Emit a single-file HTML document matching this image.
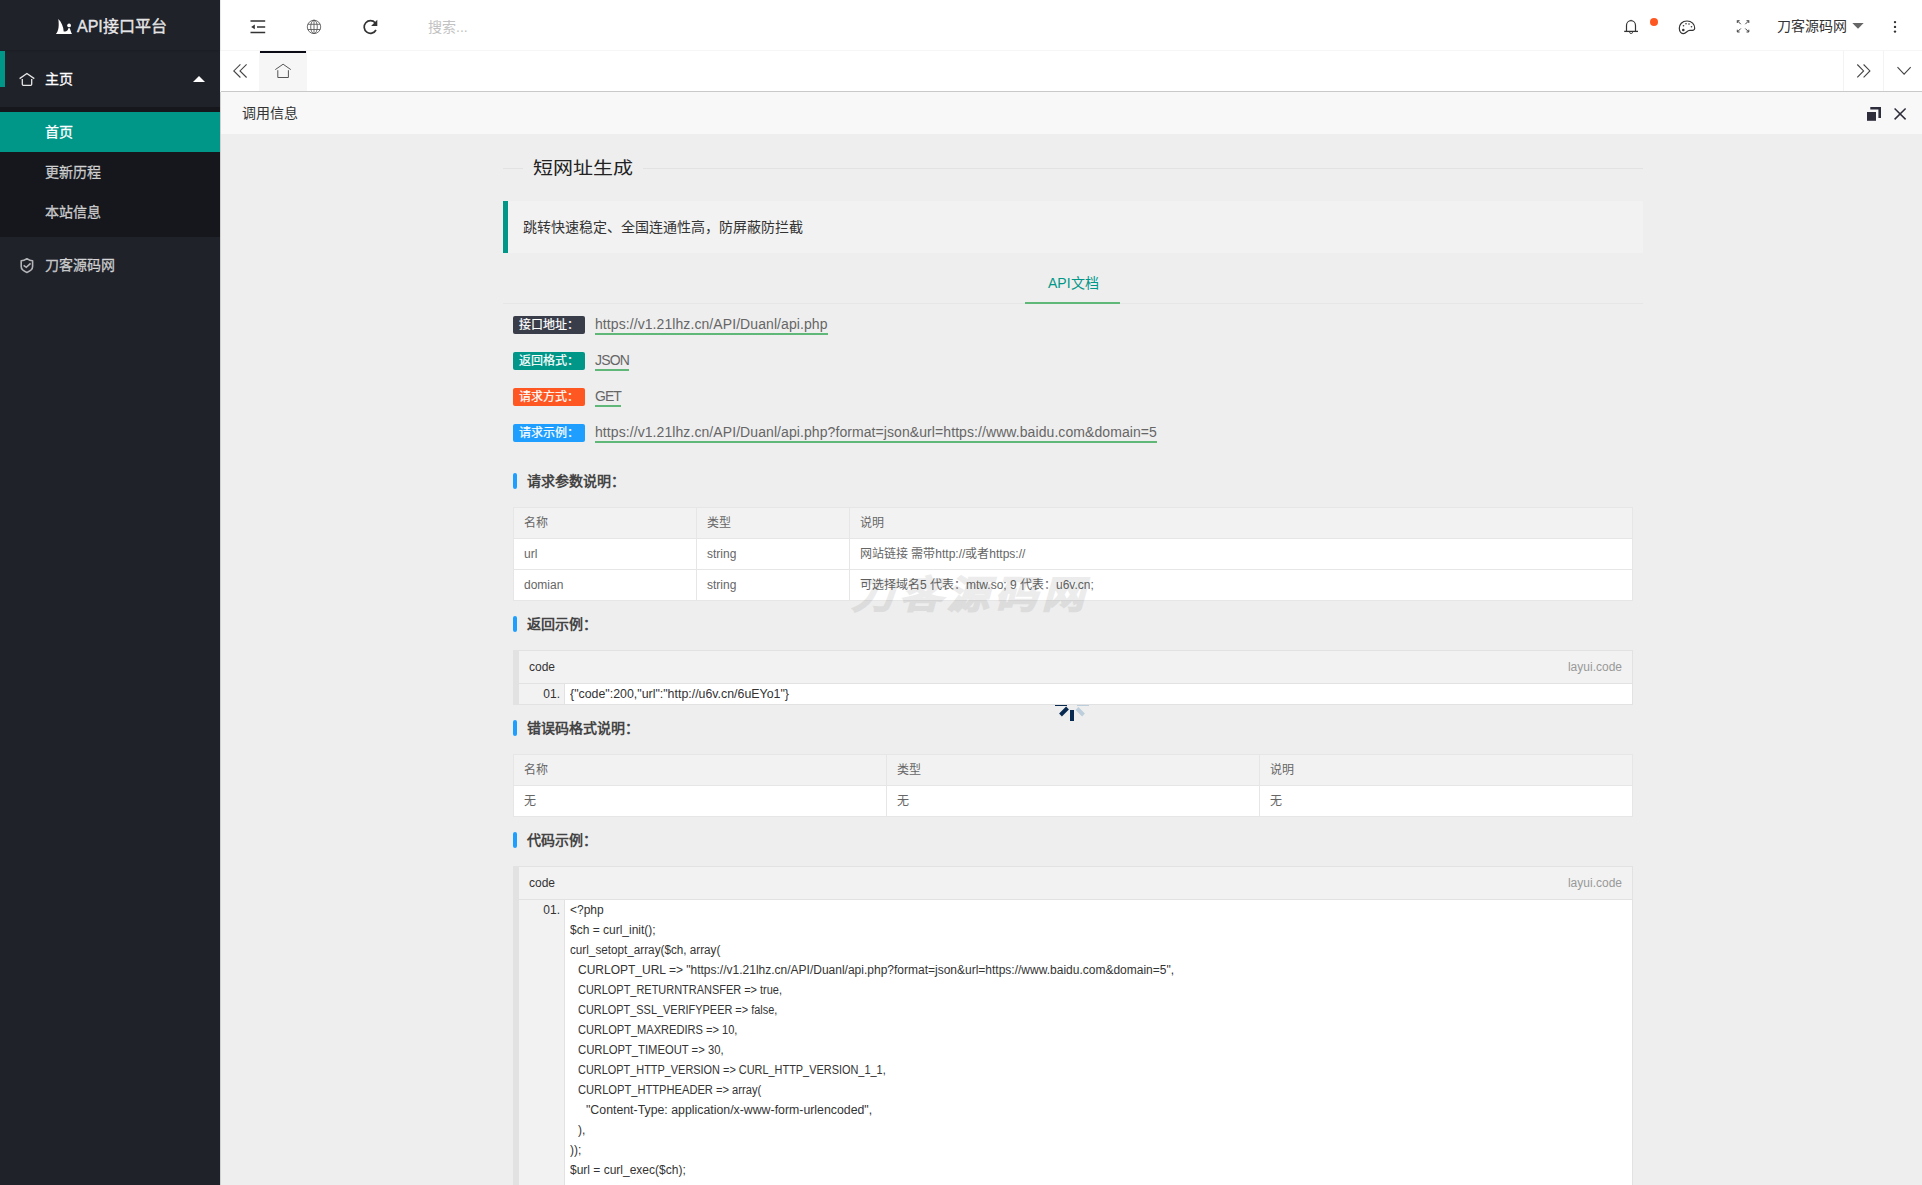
<!DOCTYPE html>
<html lang="zh-CN"><head><meta charset="utf-8">
<style>
*{margin:0;padding:0;box-sizing:border-box}
html,body{width:1922px;height:1185px;overflow:hidden;background:#eee;font-family:"Liberation Sans",sans-serif;color:#333;font-size:14px}
.a{position:absolute;white-space:nowrap}
svg{display:block;position:absolute;overflow:visible;z-index:5}
#side{position:absolute;left:0;top:0;width:220px;height:1185px;background:#20222A}
#logo{position:absolute;left:0;top:0;width:220px;height:50px;box-shadow:0 1px 2px 0 rgba(0,0,0,.15)}
.nt{position:absolute;font-size:14px;line-height:20px;color:rgba(255,255,255,.7);white-space:nowrap;-webkit-text-stroke:.3px currentColor}
#header{position:absolute;left:220px;top:0;width:1702px;height:51px;background:#fff;border-bottom:1px solid #f6f6f6}
#tabs{position:absolute;left:220px;top:51px;width:1702px;height:41px;background:#fff;border-bottom:1px solid #c9c9c9}
#ltitle{position:absolute;left:220px;top:92px;width:1702px;height:42px;background:#f8f8f8}
#content{position:absolute;left:220px;top:134px;width:1702px;height:1051px;background:#eee;overflow:hidden}
.badge{position:absolute;left:513px;width:72px;height:18px;line-height:18px;padding:0 6px;font-size:12px;color:#fff;border-radius:2px;white-space:nowrap;-webkit-text-stroke:.2px #fff}
.lnk{position:absolute;left:595px;font-size:14px;line-height:20px;color:#666;letter-spacing:.08px;white-space:nowrap;border-bottom:2px solid #5FB878;height:21px}
.hbar{position:absolute;left:513px;width:4px;height:16px;background:#1E9FFF;border-radius:2px}
.htx{position:absolute;left:527px;font-size:14px;line-height:20px;font-weight:bold;color:#444;white-space:nowrap}
.tb{position:absolute;left:513px;width:1120px;border-collapse:collapse;table-layout:fixed;background:#fff;font-size:12px;color:#666}
.tb td{border:1px solid #e6e6e6;padding:5px 10px;line-height:20px;height:31px;white-space:nowrap}
.tb tr.th td{background:#f2f2f2}
.code{position:absolute;left:513px;width:1120px;border:1px solid #e2e2e2;border-left-width:6px;background:#f2f2f2;font-size:12px;color:#333;overflow:hidden}
.ch{height:33px;line-height:32px;border-bottom:1px solid #e2e2e2;padding:0 10px;position:relative}
.ch .r{position:absolute;right:10px;top:0;color:#999}
.cl{position:relative}
.num{position:absolute;left:0;top:0;width:41px;text-align:right;line-height:20px;color:#333}
.src{margin-left:45px;border-left:1px solid #e2e2e2;background:#fff;padding:0 5px;line-height:20px}
.src div{height:20px;white-space:pre}
.sx{display:inline-block;transform-origin:0 0}.src .i1{padding-left:8px}.src .i2{padding-left:16px}
</style></head><body>
<!-- SIDEBAR -->
<div id="side">
  <div id="logo">
    <svg width="220" height="50" style="left:0;top:0"><path d="M58.3,19 C59.2,25 58.8,31 55.9,34 L72,34 C71,32.5 70.5,30 69.8,28.3 L68.3,28.3 C68,31 66,31.6 63.7,31.6 C63.5,27 61.5,22 58.3,19 Z" fill="#fff"/><circle cx="69.1" cy="25.4" r="1.9" fill="#fff"/></svg>
    <div class="a" style="left:77px;top:16.5px;font-size:16px;line-height:20px;color:rgba(255,255,255,.85);-webkit-text-stroke:.4px rgba(255,255,255,.85)">API接口平台</div>
  </div>
  <!-- nav item 主页 -->
  <div class="a" style="left:0;top:51px;width:5px;height:36px;background:#009688"></div>
  <svg width="220" height="120" style="left:0;top:0"><path d="M19.6,78.6 L26.9,73.5 L34.3,78.6 M22.3,79 V84.3 Q22.3,85.3 23.3,85.3 H30.7 Q31.7,85.3 31.7,84.3 V79" fill="none" stroke="#e6e6e6" stroke-width="1.3"/><path d="M193,82 L199,76 L205,82 Z" fill="#fff"/></svg>
  <div class="nt" style="left:45px;top:69px;color:#fff;font-weight:500">主页</div>
  <div class="a" style="left:0;top:107px;width:220px;height:130px;background:rgba(0,0,0,.3)"></div>
  <div class="a" style="left:0;top:112px;width:220px;height:40px;background:#009688"></div>
  <div class="nt" style="left:45px;top:122px;color:#fff;font-weight:500">首页</div>
  <div class="nt" style="left:45px;top:162px;font-weight:500">更新历程</div>
  <div class="nt" style="left:45px;top:202px;font-weight:500">本站信息</div>
  <svg width="220" height="300" style="left:0;top:0"><path d="M26.9,258.7 Q24,260.8 21.2,260.8 V266.5 Q21.2,270.3 26.9,272.4 Q32.6,270.3 32.6,266.5 V260.8 Q29.8,260.8 26.9,258.7 Z" fill="none" stroke="#b4b5b8" stroke-width="1.6" stroke-linejoin="round"/><path d="M23.6,265.3 L26.3,267.3 L30.6,263.4" fill="none" stroke="#b4b5b8" stroke-width="1.6"/></svg>
  <div class="nt" style="left:45px;top:255px;font-weight:500">刀客源码网</div>
</div>

<!-- HEADER -->
<div id="header"></div>
<svg width="1922" height="140" style="left:0;top:0">
  <!-- shrink icon -->
  <path d="M250.5,21.1 H265.2 M257,26.9 H265.2 M250.5,32.4 H265.2" stroke="#333" stroke-width="1.5"/>
  <path d="M251.2,26.9 L254.8,24.6 V29.2 Z" fill="#333"/>
  <!-- globe -->
  <g fill="none" stroke="#555" stroke-width=".85"><circle cx="314" cy="26.9" r="6.7"/><ellipse cx="314" cy="26.9" rx="3.3" ry="6.7"/><path d="M314,20.2 V33.6 M307.8,24.3 H320.2 M307.8,29.5 H320.2"/></g>
  <!-- refresh -->
  <path d="M376,30 A6.3,6.3 0 1 1 375.2,22.8" fill="none" stroke="#333" stroke-width="1.7"/>
  <path d="M377.3,19.8 V26 H371.1 Z" fill="#333"/>
  <!-- bell -->
  <path d="M626.5,31.2 V25.5 A4.5,4.8 0 0 1 635.5,25.5 V31.2" transform="translate(1000,0)" fill="none" stroke="#333" stroke-width="1.2"/>
  <path d="M1624.2,31.4 H1638" stroke="#333" stroke-width="1.3"/>
  <path d="M1629.6,32 A1.5,1.6 0 0 0 1632.6,32" fill="none" stroke="#555" stroke-width="1"/>
  <path d="M1631.1,19.8 V20.8" stroke="#555" stroke-width="1"/>
  <circle cx="1654" cy="21.9" r="4" fill="#FF5722"/>
  <!-- palette -->
  <path d="M1687,21 C1682,21 1679.3,24.5 1679.3,28.2 C1679.3,31.8 1681.5,33.6 1683.6,33.6 C1686.2,33.6 1687,30.4 1689.8,30.4 C1692,30.4 1694.7,30.8 1694.7,28.2 C1694.7,24.3 1691.8,21 1687,21 Z" fill="none" stroke="#333" stroke-width="1.2"/>
  <circle cx="1683.3" cy="30" r="1.3" fill="#333"/><circle cx="1683.5" cy="25.8" r=".8" fill="#333"/><circle cx="1686" cy="23.8" r=".8" fill="#333"/><circle cx="1689" cy="24" r=".8" fill="#333"/><circle cx="1691.5" cy="26.7" r=".8" fill="#333"/>
  <!-- fullscreen -->
  <g stroke="#444" stroke-width="1" fill="none"><path d="M1737.3,20.7 L1740.8,24.2 M1737.3,20.7 H1739.6 M1737.3,20.7 V23"/><path d="M1748.8,20.7 L1745.3,24.2 M1748.8,20.7 H1746.5 M1748.8,20.7 V23"/><path d="M1737.3,32 L1740.8,28.5 M1737.3,32 H1739.6 M1737.3,32 V29.7"/><path d="M1748.8,32 L1745.3,28.5 M1748.8,32 H1746.5 M1748.8,32 V29.7"/></g>
  <!-- caret -->
  <path d="M1852.3,23 H1863.7 L1858,28.8 Z" fill="#666"/>
  <!-- dots -->
  <circle cx="1895" cy="22.1" r="1.2" fill="#333"/><circle cx="1895" cy="26.9" r="1.2" fill="#333"/><circle cx="1895" cy="31.6" r="1.2" fill="#333"/>
</svg>
<div class="a" style="left:428px;top:17px;font-size:14px;line-height:20px;color:#c2c2c2">搜索...</div>
<div class="a" style="left:1777px;top:16px;font-size:14px;line-height:20px;color:#333">刀客源码网</div>
<div id="tabs"></div>
<div class="a" style="left:259px;top:51px;width:48px;height:40px;background:#f6f6f6"></div>
<div class="a" style="left:260px;top:51px;width:46px;height:2px;background:#0b0b16"></div>
<div class="a" style="left:1843px;top:51px;width:1px;height:40px;background:#f3f3f3"></div>
<div class="a" style="left:1883px;top:51px;width:1px;height:40px;background:#f3f3f3"></div>
<svg width="1922" height="140" style="left:0;top:0">
  <path d="M240.4,64.4 L233.8,70.9 L240.4,77.5 M246.6,64.4 L240,70.9 L246.6,77.5" fill="none" stroke="#444" stroke-width="1.1"/>
  <path d="M275.3,69.6 L283.1,64.2 L290.8,69.6 M277.8,70.2 V77.5 H288.4 V70.2" fill="none" stroke="#555" stroke-width="1"/>
  <path d="M1857.3,64.5 L1863.6,70.9 L1857.3,77.4 M1863.6,64.5 L1869.9,70.9 L1863.6,77.4" fill="none" stroke="#444" stroke-width="1.1"/>
  <path d="M1897.5,67.2 L1904.1,74.1 L1910.7,67.2" fill="none" stroke="#444" stroke-width="1.1"/>
  <!-- layer icons -->
  <path d="M1870.3,107 H1881 V118 H1878.4 V109.6 H1870.3 Z" fill="#2E2D3C"/>
  <rect x="1867" y="112" width="9" height="8.8" fill="#2E2D3C"/>
  <path d="M1894.6,108.5 L1905.6,119.4 M1905.6,108.5 L1894.6,119.4" stroke="#2E2D3C" stroke-width="1.5"/>
</svg>
<div id="ltitle"></div>
<div class="a" style="left:242px;top:103px;font-size:14px;line-height:20px;color:#333">调用信息</div>
<div id="content"></div>
<div class="a" style="left:220px;top:92px;width:1px;height:1093px;background:#d0d0d0"></div>
<div class="a" style="left:220px;top:0;width:1px;height:51px;background:#e9e9e9;z-index:4"></div>
<div class="a" style="left:220px;top:51px;width:1px;height:41px;background:#f3f3f3;z-index:4"></div>
<!-- fieldset title -->
<div class="a" style="left:503px;top:168px;width:20px;height:1px;background:#e2e2e2"></div>
<div class="a" style="left:643px;top:168px;width:1000px;height:1px;background:#e2e2e2"></div>
<div class="a" style="left:533px;top:155px;font-size:20px;line-height:24px;color:#222;transform:scaleY(.88);transform-origin:0 20px">短网址生成</div>
<!-- quote -->
<div class="a" style="left:503px;top:201px;width:1140px;height:52px;background:#f2f2f2;border-left:5px solid #009688;border-radius:0 2px 2px 0"></div>
<div class="a" style="left:523px;top:217px;font-size:14px;line-height:20px;color:#333">跳转快速稳定、全国连通性高，防屏蔽防拦截</div>
<!-- tab -->
<div class="a" style="left:503px;top:303px;width:1140px;height:1px;background:#e6e6e6"></div>
<div class="a" style="left:1025px;top:302px;width:95px;height:2px;background:#5FB878"></div>
<div class="a" style="left:1048px;top:273px;font-size:14px;line-height:20px;color:#009688">API文档</div>
<!-- badges -->
<div class="badge" style="top:316px;background:#393D49">接口地址：</div>
<div class="badge" style="top:352px;background:#009688">返回格式：</div>
<div class="badge" style="top:388px;background:#FF5722">请求方式：</div>
<div class="badge" style="top:424px;background:#1E9FFF">请求示例：</div>
<div class="lnk" style="top:314px">https://v1.21lhz.cn/API/Duanl/api.php</div>
<div class="lnk" style="top:350px;letter-spacing:-.8px">JSON</div>
<div class="lnk" style="top:386px;letter-spacing:-1px">GET</div>
<div class="lnk" style="top:422px">https://v1.21lhz.cn/API/Duanl/api.php?format=json&amp;url=https://www.baidu.com&amp;domain=5</div>
<!-- heading 1 -->
<div class="hbar" style="top:473px"></div>
<div class="htx" style="top:471px">请求参数说明：</div>
<table class="tb" style="top:507px">
<colgroup><col style="width:183px"><col style="width:153px"><col></colgroup>
<tr class="th"><td>名称</td><td>类型</td><td>说明</td></tr>
<tr><td>url</td><td>string</td><td>网站链接 需带http://或者https://</td></tr>
<tr><td>domian</td><td>string</td><td>可选择域名5 代表：mtw.so; 9 代表：u6v.cn;</td></tr>
</table>
<!-- heading 2 -->
<div class="hbar" style="top:616px"></div>
<div class="htx" style="top:614px">返回示例：</div>
<div class="code" style="top:650px;height:55px">
  <div class="ch"><span>code</span><span class="r">layui.code</span></div>
  <div class="cl"><div class="num">01.</div><div class="src"><div><span class="sx" style="transform:scaleX(1.031)">{"code":200,"url":"http://u6v.cn/6uEYo1"}</span></div></div></div>
</div>
<!-- heading 3 -->
<div class="hbar" style="top:720px"></div>
<div class="htx" style="top:718px">错误码格式说明：</div>
<table class="tb" style="top:754px">
<colgroup><col style="width:373px"><col style="width:373px"><col></colgroup>
<tr class="th"><td>名称</td><td>类型</td><td>说明</td></tr>
<tr><td>无</td><td>无</td><td>无</td></tr>
</table>
<!-- heading 4 -->
<div class="hbar" style="top:832px"></div>
<div class="htx" style="top:830px">代码示例：</div>
<div class="code" style="top:866px;height:400px">
  <div class="ch"><span>code</span><span class="r">layui.code</span></div>
  <div class="cl" style="height:400px"><div class="num">01.</div><div class="src">
<div>&lt;?php</div>
<div>$ch = curl_init();</div>
<div><span class="sx" style="transform:scaleX(0.976)">curl_setopt_array($ch, array(</span></div>
<div class="i1">CURLOPT_URL =&gt; "https://v1.21lhz.cn/API/Duanl/api.php?format=json&amp;url=https://www.baidu.com&amp;domain=5",</div>
<div class="i1"><span class="sx" style="transform:scaleX(0.913)">CURLOPT_RETURNTRANSFER =&gt; true,</span></div>
<div class="i1"><span class="sx" style="transform:scaleX(0.911)">CURLOPT_SSL_VERIFYPEER =&gt; false,</span></div>
<div class="i1"><span class="sx" style="transform:scaleX(0.923)">CURLOPT_MAXREDIRS =&gt; 10,</span></div>
<div class="i1"><span class="sx" style="transform:scaleX(0.938)">CURLOPT_TIMEOUT =&gt; 30,</span></div>
<div class="i1"><span class="sx" style="transform:scaleX(0.91)">CURLOPT_HTTP_VERSION =&gt; CURL_HTTP_VERSION_1_1,</span></div>
<div class="i1"><span class="sx" style="transform:scaleX(0.928)">CURLOPT_HTTPHEADER =&gt; array(</span></div>
<div class="i2"><span class="sx" style="transform:scaleX(1.027)">"Content-Type: application/x-www-form-urlencoded",</span></div>
<div class="i1">),</div>
<div>));</div>
<div>$url = curl_exec($ch);</div>
<div>&nbsp;</div>
</div></div>
</div>
<!-- watermark -->
<div class="a" style="left:852px;top:568px;font-size:42px;line-height:50px;font-weight:bold;font-style:italic;color:#000;-webkit-text-stroke:1.8px #000;opacity:.07;letter-spacing:5.5px;transform:scaleY(.9);transform-origin:0 44px;z-index:6">刀客源码网</div>
<!-- spinner -->
<svg width="1922" height="1185" style="left:0;top:0;z-index:6">
  <rect x="1055" y="705" width="12" height="1" fill="#082a50"/>
  <rect x="1077" y="705" width="12" height="1" fill="#bccddb"/>
  <polygon points="1059.1,713.6 1066.1,706.6 1068.9,709.4 1061.9,716.4" fill="#082a50"/>
  <rect x="1070" y="710" width="4" height="11" fill="#082a50"/>
  <polygon points="1078.4,707.1 1084.9,713.6 1082.1,716.4 1075.6,709.9" fill="#bccddb"/>
</svg>
</body></html>
